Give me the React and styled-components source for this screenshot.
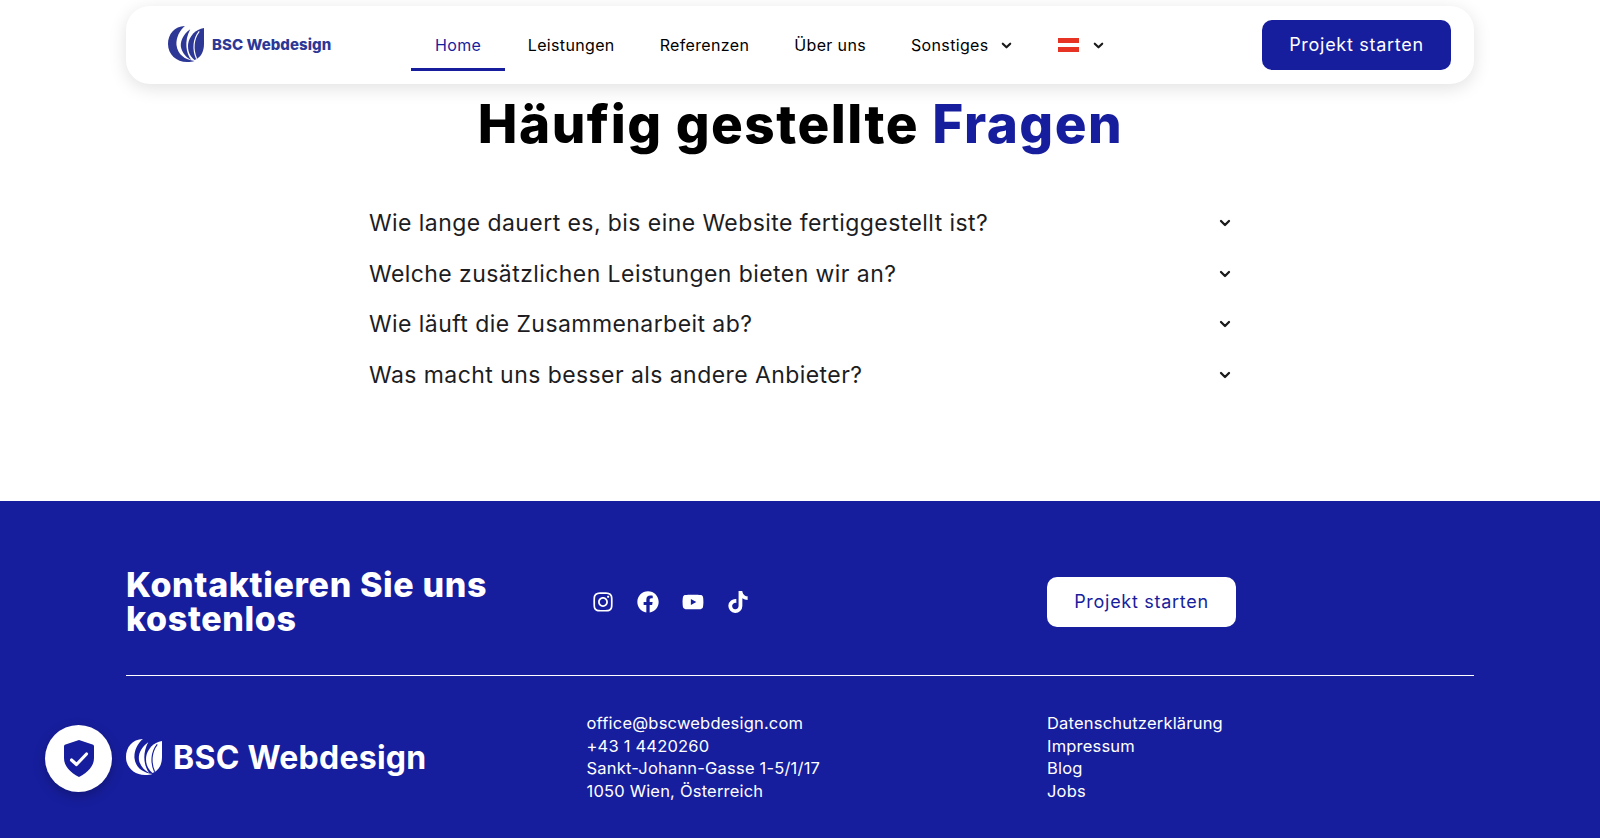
import React from "react";
import styled, { createGlobalStyle } from "styled-components";
import { FaInstagram, FaFacebook, FaYoutube, FaTiktok } from "react-icons/fa";

const Global = createGlobalStyle`
  html, body { margin: 0; padding: 0; background: #fff; overflow: hidden; }
  body { font-family: "Inter", "Liberation Sans", sans-serif; color: #000; }
`;
const BLUE = "#171e9d";

const Page = styled.div`
  width: 1600px; height: 838px; display: flex; flex-direction: column; overflow: hidden;
`;
const Header = styled.header`
  box-sizing: border-box; width: 1348px; height: 78px; margin: 6px auto 0; flex: none;
  background: #fff; border-radius: 24px; box-shadow: 0 4px 18px rgba(0,0,0,.12);
  display: flex; align-items: center; padding: 0 23px 0 42px;
`;
const LogoLink = styled.a`
  display: flex; align-items: center; gap: 8px; width: 243px; flex: none; margin-top: -2px;
  color: #2d3796; font-weight: 800; font-size: 15px; letter-spacing: .05px;
`;
const Nav = styled.nav`display: flex; align-items: center; height: 100%; flex: 1;`;
const NavItem = styled.a`
  box-sizing: border-box; height: 52px; padding: 3px ${p => p.$active ? 24 : 22.5}px 0; display: flex; align-items: center; gap: ${p => p.$gap || 11}px;
  font-size: 16px; font-weight: 400; letter-spacing: .35px; white-space: nowrap;
  color: ${p => p.$active ? BLUE : "#000"};
  border-bottom: 3px solid ${p => p.$active ? BLUE : "transparent"};
`;
const Flag = styled.span`
  display: block; width: 21px; height: 14px; background: linear-gradient(#e63323 0 36%, #fff 36% 64%, #e63323 64%);
`;
const Cta = styled.a`
  box-sizing: border-box; display: flex; align-items: center; justify-content: center; padding-bottom: 1px;
  width: 189px; height: 50px; border-radius: 10px; font-size: 18px; font-weight: 400; letter-spacing: .72px; flex: none;
  background: ${p => p.$light ? "#fff" : BLUE}; color: ${p => p.$light ? BLUE : "#fff"};
`;
const Faq = styled.section`
  flex: 1; display: flex; flex-direction: column; align-items: center;
`;
const Title = styled.h1`
  margin: 5px 0 39px 1px; font-size: 53px; line-height: 70px; font-weight: 800; letter-spacing: 1.5px; color: #000;
  span { color: ${BLUE}; }
`;
const FaqList = styled.div`width: 863px; margin-left: 1px;`;
const FaqRow = styled.div`
  height: 50.6px; display: flex; align-items: center; justify-content: space-between;
  font-size: 23px; letter-spacing: .43px; color: #1d1d1f;
`;
const Footer = styled.footer`
  height: 337px; flex: none; background: ${BLUE}; color: #fff; box-sizing: border-box; padding: 66px 126px 0;
`;
const Grid = styled.div`
  display: grid; grid-template-columns: 460.5px 460.5px 1fr; align-items: center;
`;
const TopGrid = styled(Grid)`
  height: 70px; padding-bottom: 38px; border-bottom: 1px solid #fff; box-sizing: content-box;
`;
const ContactTitle = styled.h2`
  margin: 0; font-size: 34px; line-height: 34px; font-weight: 800; letter-spacing: .65px; width: 420px;
`;
const Socials = styled.div`display: flex; gap: 23px; padding-left: 5px; align-items: center; font-size: 22px; svg { display: block; }`;
const BottomGrid = styled(Grid)`margin-top: 36px;`;
const FootLogo = styled.div`
  display: flex; align-items: center; gap: 11px; font-size: 32px; font-weight: 700; letter-spacing: .25px;
`;
const Lines = styled.div`font-size: 16.5px; line-height: 22.5px; font-weight: 400; letter-spacing: .2px; white-space: nowrap;`;
const Badge = styled.div`
  position: fixed; left: 45px; top: 725px; width: 67px; height: 67px; border-radius: 50%;
  background: #fff; display: flex; align-items: center; justify-content: center;
  box-shadow: 0 4px 12px rgba(0,0,0,.25);
`;

const Chevron = ({ size = 13 }) => (
  <svg width={size} height={size} viewBox="0 0 14 14" fill="none" stroke="#1a1a1a" strokeWidth="2.3" strokeLinecap="round" strokeLinejoin="round">
    <path d="M3 5l4 4 4-4" />
  </svg>
);

const Leaf = ({ size, color, line }) => (
  <svg width={size} height={size} viewBox="0 0 34 34">
    <path fill={color} d="M16 0C6 0 0 8 0 17c0 10 8 17 18 17 3 0 5-.5 7-1-9-1-16-6-17-15-.5-7 3-14 8-18z" />
    <path fill={color} d="M21 3c-7 5-10 12-8.500 18 1.500 5 5 9 9.500 11-5-6-7-18-1-29z" />
    <path fill={color} d="M34 2c-8 1-14 8-15 15-.5 6 1 11 6 15 6-2 9-8 9-15z" />
    <path fill="none" stroke={line} strokeWidth="1.100" d="M29.500 5C24 12 23 22 27 31" />
  </svg>
);

const Shield = () => (
  <svg width="30" height="37" viewBox="0 0 30 37">
    <path fill={BLUE} d="M15 0l13.500 4.500c1 .3 1.500 1 1.500 2V18c0 8-6 14.500-15 19C6 32.500 0 26 0 18V6.500c0-1 .5-1.700 1.500-2z" />
    <path fill="none" stroke="#fff" strokeWidth="3.200" strokeLinecap="round" strokeLinejoin="round" d="M7.500 20l5 4.500 10-10.500" />
  </svg>
);

const questions = [
  "Wie lange dauert es, bis eine Website fertiggestellt ist?",
  "Welche zusätzlichen Leistungen bieten wir an?",
  "Wie läuft die Zusammenarbeit ab?",
  "Was macht uns besser als andere Anbieter?",
];

export default function App() {
  return (
    <Page>
      <Global />
      <Header>
        <LogoLink><Leaf size={36} color="#2d3796" line="#fff" />BSC Webdesign</LogoLink>
        <Nav>
          <NavItem $active>Home</NavItem>
          <NavItem>Leistungen</NavItem>
          <NavItem>Referenzen</NavItem>
          <NavItem>Über uns</NavItem>
          <NavItem>Sonstiges <Chevron /></NavItem>
          <NavItem $gap={13}><Flag /> <Chevron /></NavItem>
        </Nav>
        <Cta>Projekt starten</Cta>
      </Header>
      <Faq>
        <Title>Häufig gestellte <span>Fragen</span></Title>
        <FaqList>
          {questions.map(q => (
            <FaqRow key={q}>{q}<Chevron size={14} /></FaqRow>
          ))}
        </FaqList>
      </Faq>
      <Footer>
        <TopGrid>
          <ContactTitle>Kontaktieren Sie uns kostenlos</ContactTitle>
          <Socials><FaInstagram /><FaFacebook /><FaYoutube /><FaTiktok /></Socials>
          <Cta $light>Projekt starten</Cta>
        </TopGrid>
        <BottomGrid>
          <FootLogo><Leaf size={36} color="#fff" line={BLUE} />BSC Webdesign</FootLogo>
          <Lines>office@bscwebdesign.com<br />+43 1 4420260<br />Sankt-Johann-Gasse 1-5/1/17<br />1050 Wien, Österreich</Lines>
          <Lines>Datenschutzerklärung<br />Impressum<br />Blog<br />Jobs</Lines>
        </BottomGrid>
      </Footer>
      <Badge><Shield /></Badge>
    </Page>
  );
}
